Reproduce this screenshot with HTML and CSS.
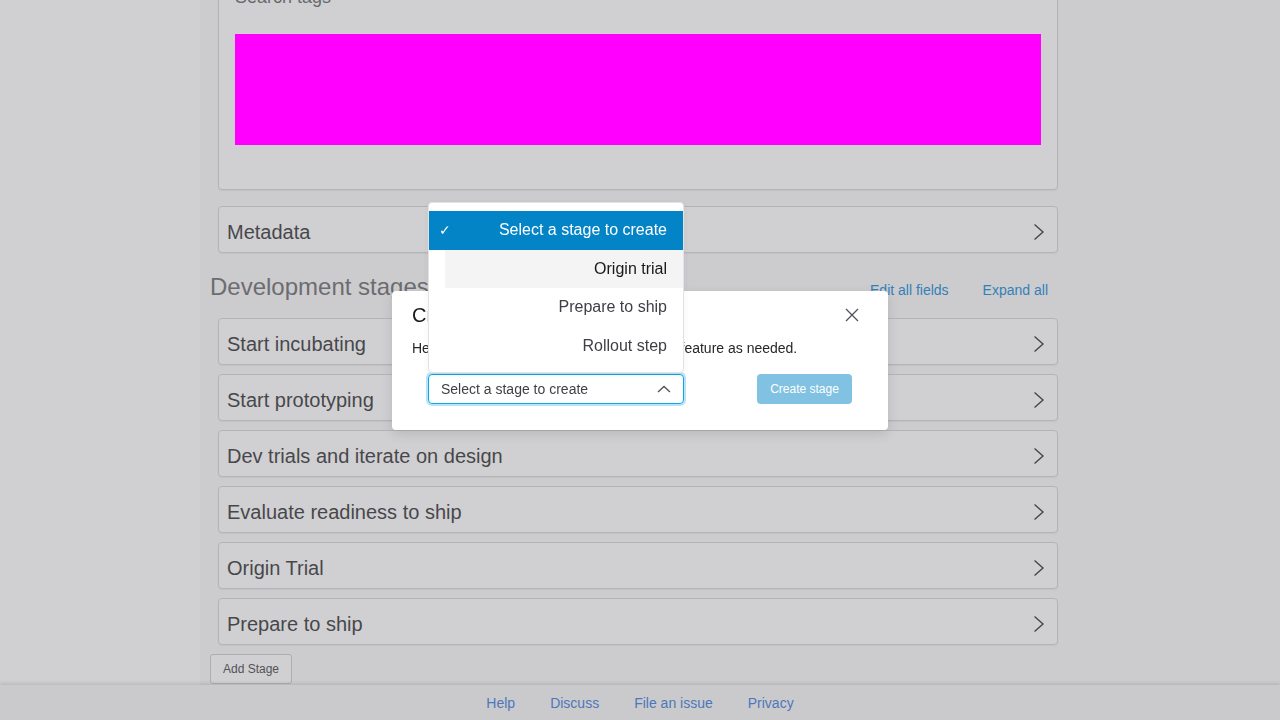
FILE: index.html
```html
<!DOCTYPE html>
<html lang="en">
<head>
<meta charset="utf-8">
<title>Create stage</title>
<link rel="stylesheet" href="styles.css">
</head>
<body>
<div class="app">
  <aside class="sidebar"></aside>
  <main class="main">
    <div class="content">
      <section class="card card-tags">
        <div class="field-label">Search tags</div>
        <div class="mask"></div>
      </section>

      <section class="card row row-meta">
        <span class="row-title">Metadata</span>
        <svg class="chev" viewBox="0 0 12 18" width="12" height="18"><path d="M1.5 1.5 L10 9 L1.5 16.5" fill="none" stroke="#333" stroke-width="1.4"/></svg>
      </section>

      <div class="stages-head">
        <h2 class="stages-title">Development stages</h2>
        <div class="stages-actions">
          <a class="link" href="#">Edit all fields</a>
          <a class="link" href="#">Expand all</a>
        </div>
      </div>

      <div class="stage-list">
        <section class="card row"><span class="row-title">Start incubating</span><svg class="chev" viewBox="0 0 12 18" width="12" height="18"><path d="M1.5 1.5 L10 9 L1.5 16.5" fill="none" stroke="#333" stroke-width="1.4"/></svg></section>
        <section class="card row"><span class="row-title">Start prototyping</span><svg class="chev" viewBox="0 0 12 18" width="12" height="18"><path d="M1.5 1.5 L10 9 L1.5 16.5" fill="none" stroke="#333" stroke-width="1.4"/></svg></section>
        <section class="card row"><span class="row-title">Dev trials and iterate on design</span><svg class="chev" viewBox="0 0 12 18" width="12" height="18"><path d="M1.5 1.5 L10 9 L1.5 16.5" fill="none" stroke="#333" stroke-width="1.4"/></svg></section>
        <section class="card row"><span class="row-title">Evaluate readiness to ship</span><svg class="chev" viewBox="0 0 12 18" width="12" height="18"><path d="M1.5 1.5 L10 9 L1.5 16.5" fill="none" stroke="#333" stroke-width="1.4"/></svg></section>
        <section class="card row"><span class="row-title">Origin Trial</span><svg class="chev" viewBox="0 0 12 18" width="12" height="18"><path d="M1.5 1.5 L10 9 L1.5 16.5" fill="none" stroke="#333" stroke-width="1.4"/></svg></section>
        <section class="card row"><span class="row-title">Prepare to ship</span><svg class="chev" viewBox="0 0 12 18" width="12" height="18"><path d="M1.5 1.5 L10 9 L1.5 16.5" fill="none" stroke="#333" stroke-width="1.4"/></svg></section>
      </div>

      <button class="add-stage" type="button">Add Stage</button>
    </div>
  </main>
</div>

<footer class="footer">
  <a class="flink" href="#">Help</a>
  <a class="flink" href="#">Discuss</a>
  <a class="flink" href="#">File an issue</a>
  <a class="flink" href="#">Privacy</a>
</footer>

<div class="overlay"></div>

<div class="dialog-wrap">
  <div class="dialog" role="dialog">
    <div class="dialog-head">
      <span class="dialog-title">Create stage</span>
      <svg class="close" viewBox="0 0 16 16" width="16" height="16"><path d="M2 2 L14 14 M14 2 L2 14" stroke="#52525b" stroke-width="1.3" fill="none"/></svg>
    </div>
    <p class="dialog-body">Here, you can add additional stages to this feature as needed.</p>
    <div class="dialog-foot">
      <div class="select">
        <span class="select-text">Select a stage to create</span>
        <svg class="select-chev" viewBox="0 0 14 8" width="14" height="8"><path d="M1 7 L7 1.5 L13 7" fill="none" stroke="#52525b" stroke-width="1.3"/></svg>
      </div>
      <button class="create-btn" type="button">Create stage</button>
    </div>
  </div>
</div>

<div class="listbox" role="listbox">
  <div class="opt opt-selected"><span class="check">&#10003;</span><span class="opt-label">Select a stage to create</span></div>
  <div class="opt opt-hover"><span class="opt-label">Origin trial</span></div>
  <div class="opt"><span class="opt-label">Prepare to ship</span></div>
  <div class="opt"><span class="opt-label">Rollout step</span></div>
</div>
</body>
</html>
```

FILE: styles.css
```css
* { box-sizing: border-box; }

html, body {
  margin: 0;
  padding: 0;
  height: 100%;
  overflow: hidden;
}

body {
  font-family: "Liberation Sans", Arial, sans-serif;
  color: #333;
  background: #fafafa;
}

.app {
  display: flex;
  height: 685px;
  overflow: hidden;
}

.sidebar {
  width: 200px;
  flex: none;
  background: #fff;
}

.main {
  flex: 1;
  background: #f9f9f9;
}

.content {
  width: 858px;
  padding: 0 10px;
  margin-top: -32px;
}

.card {
  margin-left: 8px;
  width: 840px;
  background: #fff;
  border: 1px solid #d6d6d6;
  border-radius: 4px;
  box-shadow: 0 1px 2px rgba(0,0,0,0.06);
}

.card-tags {
  padding: 16px 16px 44px;
}

.field-label {
  font-size: 18px;
  line-height: 24px;
  color: #666;
  margin-bottom: 25px;
}

.mask {
  position: relative;
  z-index: 2000;
  height: 111px;
  background: #ff00ff;
}

.row {
  height: 47px;
  display: flex;
  align-items: center;
  justify-content: space-between;
  padding: 0 12px 0 8px;
}

.row-meta {
  margin-top: 16px;
}

.row-title {
  font-size: 20px;
  color: #333;
  padding-top: 5px;
}

.chev {
  display: block;
  margin-top: 5px;
}

.stages-head {
  display: flex;
  align-items: center;
  justify-content: space-between;
  height: 65px;
  padding-right: 0;
}

.stages-title {
  margin: 0;
  padding-top: 2px;
  font-size: 24px;
  font-weight: normal;
  color: #6b6b6b;
}

.stages-actions {
  display: flex;
  gap: 34px;
  padding-top: 8px;
}

.link {
  font-size: 14px;
  color: #1288d6;
  text-decoration: none;
}

.stage-list {
  display: flex;
  flex-direction: column;
  gap: 9px;
}

.add-stage {
  margin-top: 9px;
  height: 30px;
  width: 82px;
  padding: 0;
  font-family: "Liberation Sans", Arial, sans-serif;
  font-size: 12px;
  color: #444;
  background: #fff;
  border: 1px solid #ccc;
  border-radius: 3px;
}

.footer {
  height: 35px;
  display: flex;
  justify-content: center;
  align-items: center;
  gap: 35px;
  background: #f6f6f6;
  box-shadow: 0 -2px 3px rgba(0,0,0,0.12);
  position: relative;
}

.flink {
  font-size: 14px;
  color: #3b7bd8;
  text-decoration: none;
}

.overlay {
  position: fixed;
  inset: 0;
  background: rgba(113,113,122,0.33);
  z-index: 1000;
}

.dialog-wrap {
  position: fixed;
  inset: 0;
  z-index: 1001;
  display: flex;
  justify-content: center;
  align-items: flex-start;
  padding-top: 291px;
}

.dialog {
  width: 496px;
  height: 139px;
  background: #fff;
  border-radius: 4px;
  box-shadow: 0 4px 12px rgba(0,0,0,0.12);
  font-family: "Liberation Sans", Arial, sans-serif;
  color: #18181b;
}

.dialog-head {
  display: flex;
  justify-content: space-between;
  align-items: center;
  padding: 12px 28px 12px 20px;
  height: 48px;
}

.dialog-title {
  font-size: 20px;
  line-height: 24px;
  color: #18181b;
}

.close { display: block; }

.dialog-body {
  margin: 0;
  padding: 0 20px;
  font-size: 14px;
  line-height: 18px;
  color: #27272a;
}

.dialog-foot {
  display: flex;
  justify-content: space-between;
  padding: 17px 36px 0;
}

.select {
  width: 256px;
  height: 30px;
  border: 1px solid #0ea5e9;
  border-radius: 4px;
  box-shadow: 0 0 0 2px rgba(14,165,233,0.3);
  display: flex;
  align-items: center;
  justify-content: space-between;
  padding: 0 12px 0 12px;
}

.select-text {
  font-size: 14px;
  color: #3f3f46;
}

.select-chev { display: block; }

.create-btn {
  width: 95px;
  height: 30px;
  padding: 0;
  border: 0;
  border-radius: 4px;
  background: #81c2e3;
  color: #fff;
  font-family: "Liberation Sans", Arial, sans-serif;
  font-size: 12px;
}

.listbox {
  position: fixed;
  left: 428px;
  top: 202px;
  width: 256px;
  height: 171px;
  z-index: 1002;
  background: #fff;
  border: 1px solid #e4e4e7;
  border-radius: 4px;
  padding: 8px 0;
  font-family: "Liberation Sans", Arial, sans-serif;
  box-shadow: 0 2px 6px rgba(0,0,0,0.06);
}

.opt {
  height: 38.5px;
  display: flex;
  align-items: center;
  justify-content: flex-end;
  padding-right: 16px;
  font-size: 16px;
  color: #3f3f46;
}

.opt-selected {
  background: #0284c7;
  color: #fff;
  justify-content: space-between;
  padding-left: 10px;
}

.check {
  font-size: 14px;
  color: #fff;
}

.opt-hover {
  margin-left: 16px;
  background: #f4f4f5;
  color: #18181b;
}
```
